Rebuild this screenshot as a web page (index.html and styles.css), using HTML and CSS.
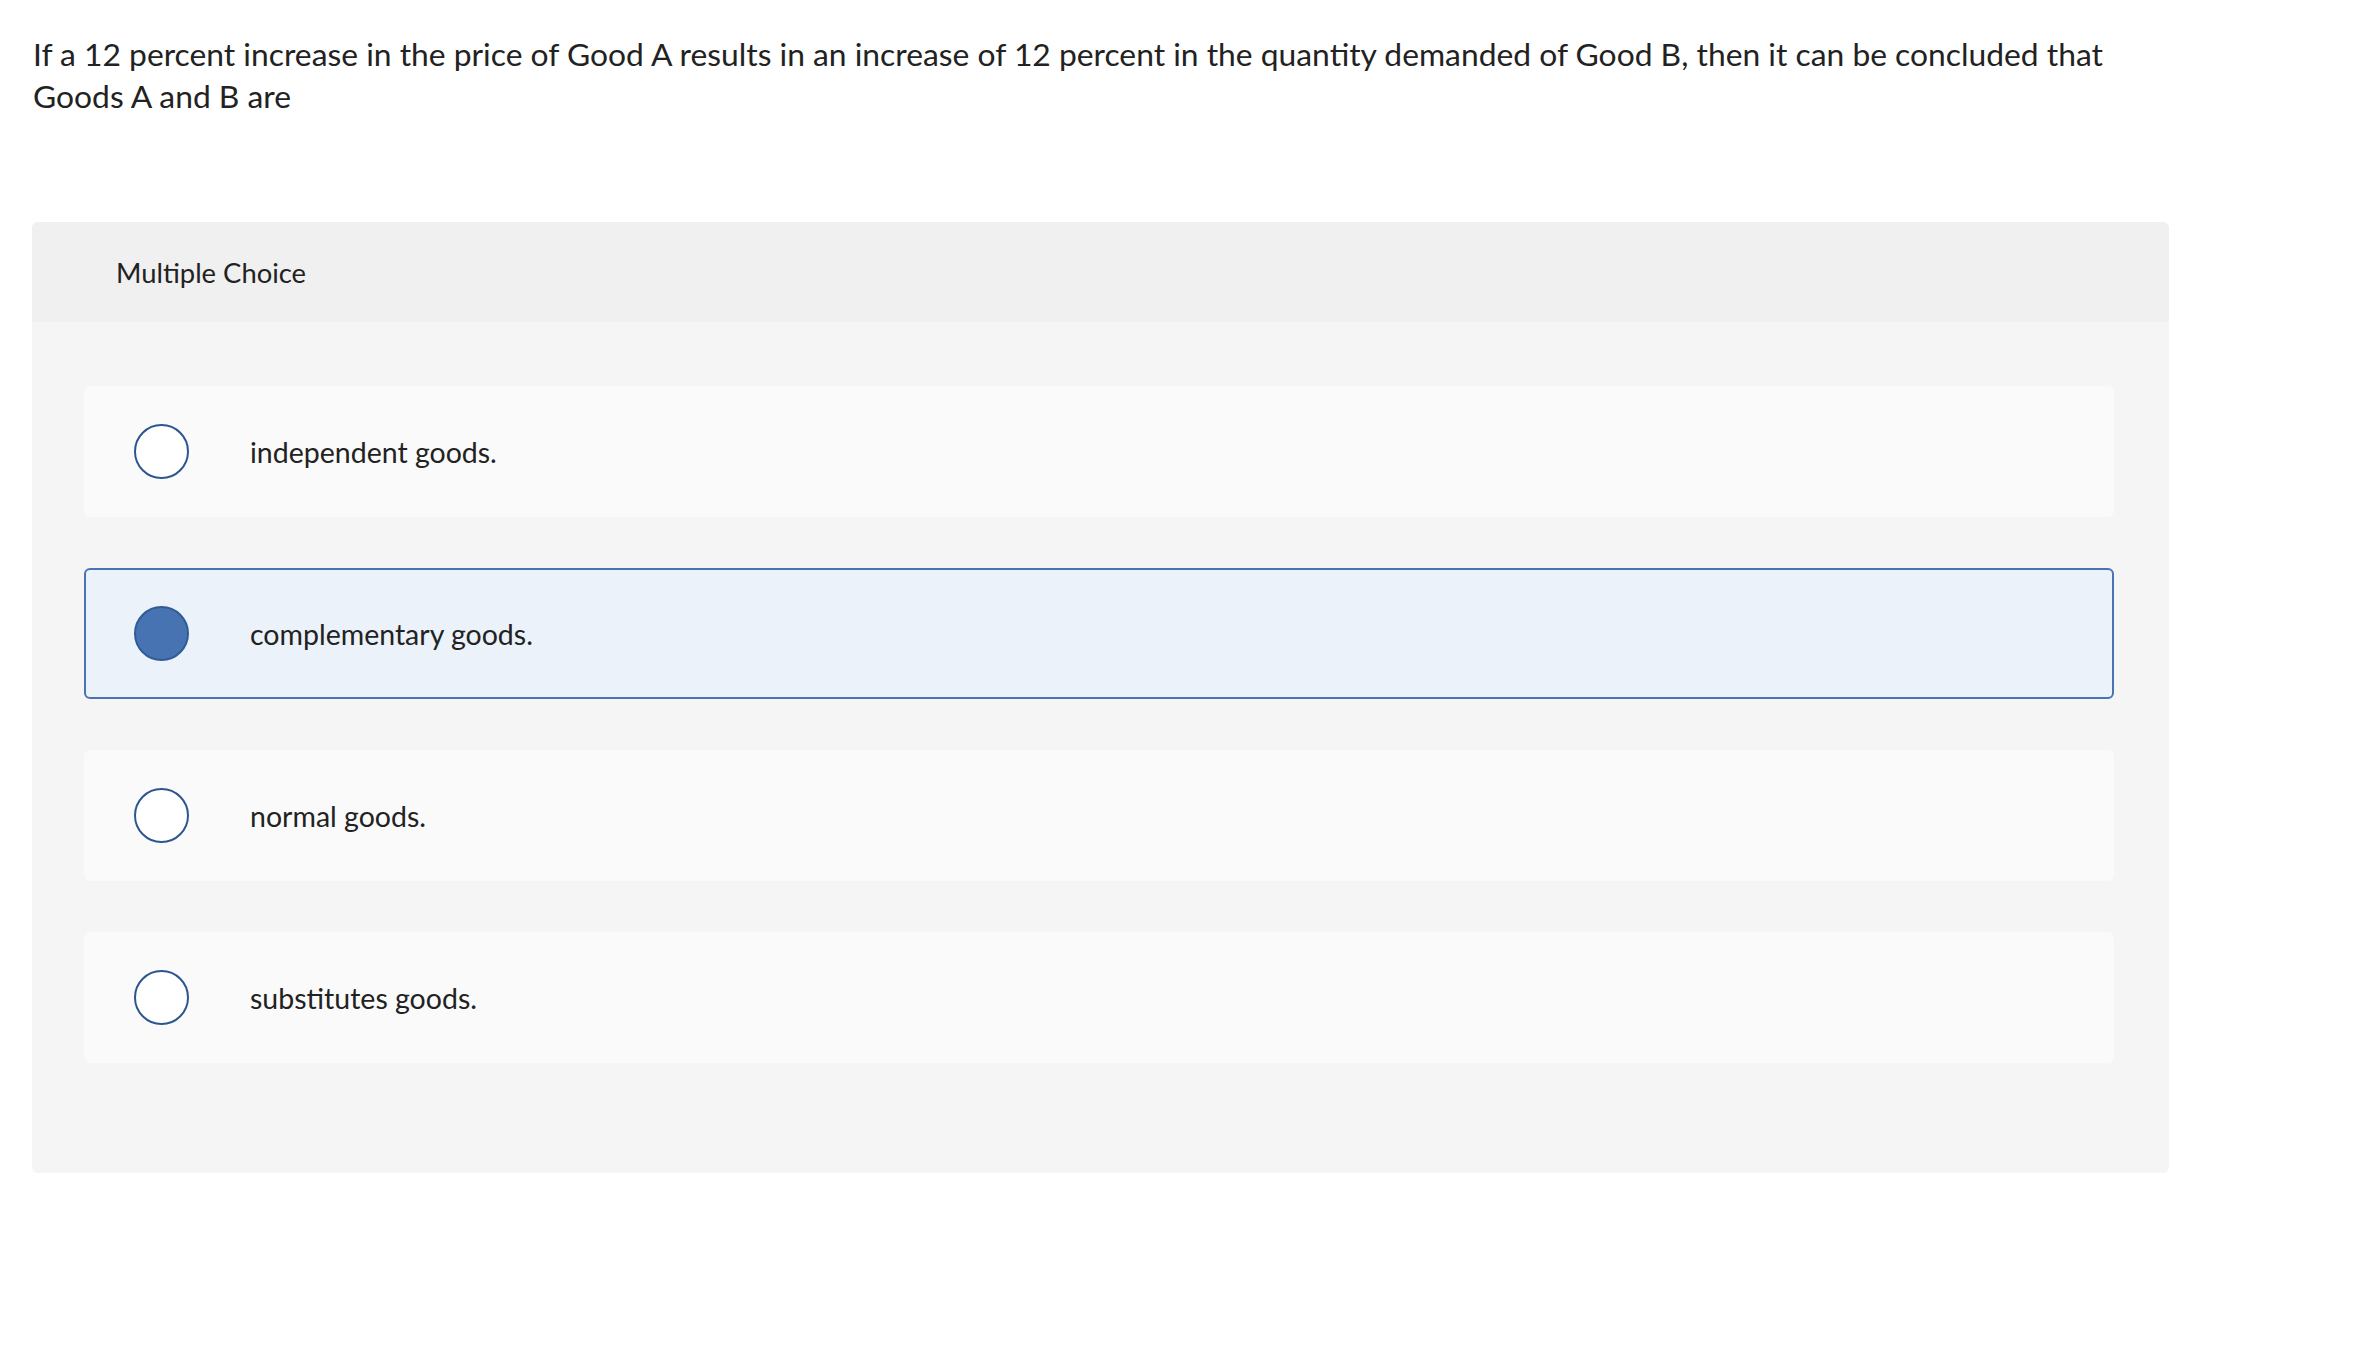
FILE: index.html
```html
<!DOCTYPE html>
<html lang="en">
<head>
<meta charset="utf-8">
<title>Multiple Choice</title>
<link rel="stylesheet" href="styles.css">
</head>
<body>
<main class="page">
  <p class="question">If a 12 percent increase in the price of Good A results in an increase of 12 percent in the quantity demanded of Good B, then it can be concluded that Goods A and B are</p>
  <section class="card">
    <header class="card-head">Multiple Choice</header>
    <div class="options">
      <label class="option"><span class="radio"></span><span class="option-text">independent goods.</span></label>
      <label class="option selected"><span class="radio"></span><span class="option-text">complementary goods.</span></label>
      <label class="option"><span class="radio"></span><span class="option-text">normal goods.</span></label>
      <label class="option"><span class="radio"></span><span class="option-text">substitutes goods.</span></label>
    </div>
  </section>
</main>
</body>
</html>
```

FILE: styles.css
```css
* { box-sizing: border-box; }
html, body { margin: 0; padding: 0; background: #ffffff; }
body {
  font-family: Lato, "Open Sans", "Liberation Sans", sans-serif;
  color: #222222;
}
.page {
  padding: 33px 0 0 32px;
  width: 2169px;
}
.question {
  margin: 0;
  padding-left: 1px;
  font-size: 31.8px;
  line-height: 42px;
}
.card {
  margin-top: 105px;
  width: 2137px;
  background: #f5f5f5;
  border-radius: 6px;
  overflow: hidden;
}
.card-head {
  height: 100px;
  display: flex;
  align-items: center;
  padding-left: 84px;
  background: #f0f0f0;
  font-size: 27.4px;
}
.options {
  display: flex;
  flex-direction: column;
  gap: 51px;
  padding: 64px 55px 110px 52px;
}
.option {
  height: 131px;
  display: flex;
  align-items: center;
  padding-left: 49px;
  background: #fafafa;
  border: 1px solid #fafafa;
  border-radius: 6px;
  font-size: 28.5px;
}
.option.selected {
  background: #ebf2fa;
  border: 2px solid #4a73b3;
  padding-left: 48px;
}
.radio {
  width: 55px;
  height: 55px;
  flex: none;
  border-radius: 50%;
  border: 2px solid #2c568f;
  background: #ffffff;
}
.option.selected .radio {
  background: #4773b3;
  border: 2px solid #305c95;
}
.option-text {
  margin-left: 61px;
}
```
